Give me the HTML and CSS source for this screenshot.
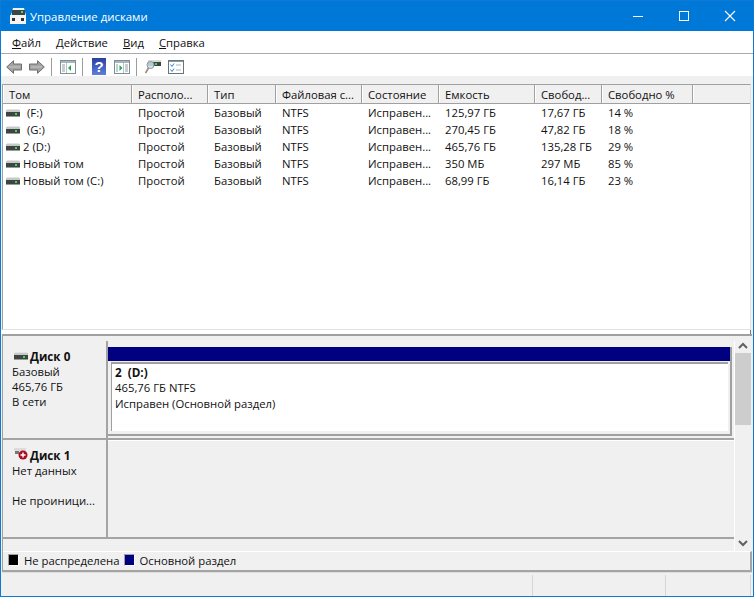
FILE: index.html
```html
<!DOCTYPE html>
<html lang="ru">
<head>
<meta charset="utf-8">
<title>Управление дисками</title>
<link rel="stylesheet" href="styles.css">
</head>
<body>
<svg class="defs" width="0" height="0" aria-hidden="true">
  <defs>
    <symbol id="drive" viewBox="0 0 14 8">
      <rect x="1" y="0" width="12" height="1" fill="#e4e4e4"/>
      <rect x="0" y="1" width="14" height="2" fill="#c8c8c8"/>
      <rect x="0" y="3" width="14" height="4" fill="#3e4442"/>
      <rect x="0" y="7" width="14" height="1" fill="#9a9a9a"/>
      <rect x="9" y="4" width="2" height="2" fill="#35e04a"/>
    </symbol>
    <linearGradient id="helpfill" x1="0" y1="0" x2="0" y2="1">
      <stop offset="0" stop-color="#2a3f9e"/>
      <stop offset="1" stop-color="#5f7fdc"/>
    </linearGradient>
  </defs>
</svg>
<div class="window">
  <header class="titlebar">
    <svg class="app-icon" width="18" height="17" viewBox="0 0 18 17">
      <path d="M4 0h11l2 7H2z" fill="#f0f0f0"/>
      <rect x="3" y="2" width="13" height="5" fill="#39464a"/>
      <rect x="12" y="3" width="2" height="2" fill="#3fe05a"/>
      <rect x="1" y="7" width="16" height="9" fill="#f4f4f4"/>
      <rect x="3" y="10" width="3" height="3" fill="#333"/>
      <rect x="12" y="10" width="3" height="3" fill="#333"/>
    </svg>
    <span class="title">Управление дисками</span>
    <div class="win-buttons">
      <svg class="win-btn" width="46" height="30" viewBox="0 0 46 30"><rect x="18" y="15" width="10" height="1" fill="#fff"/></svg>
      <svg class="win-btn" width="46" height="30" viewBox="0 0 46 30"><rect x="18.5" y="10.5" width="9" height="9" fill="none" stroke="#fff"/></svg>
      <svg class="win-btn" width="46" height="30" viewBox="0 0 46 30"><path d="M18 10l10 10M28 10L18 20" stroke="#fff" stroke-width="1.1" fill="none"/></svg>
    </div>
  </header>

  <nav class="menubar">
    <span class="menu-item"><u>Ф</u>айл</span>
    <span class="menu-item"><u>Д</u>ействие</span>
    <span class="menu-item"><u>В</u>ид</span>
    <span class="menu-item"><u>С</u>правка</span>
  </nav>

  <div class="toolbar">
    <div class="tool-group">
      <svg class="tool" width="16" height="14" viewBox="0 0 16 14"><path d="M.7 7L7.5.7V4h8v6h-8v3.3z" fill="#a3a3a3" stroke="#6e6e6e"/><path d="M3 7h11" stroke="#c6c6c6"/></svg>
      <svg class="tool" width="16" height="14" viewBox="0 0 16 14"><path d="M15.3 7L8.5.7V4h-8v6h8v3.3z" fill="#a3a3a3" stroke="#6e6e6e"/><path d="M2 7h11" stroke="#c6c6c6"/></svg>
    </div>
    <span class="tool-sep"></span>
    <svg class="tool" width="16" height="14" viewBox="0 0 16 14"><rect x=".5" y=".5" width="15" height="13" fill="#fff" stroke="#7f8d96"/><rect x="1" y="1" width="14" height="2" fill="#a8b4bc"/><path d="M2 5h3M2 7h3M2 9h3M2 11h3" stroke="#8f9ca4"/><path d="M6.5 3v10" stroke="#b8c2c8"/><path d="M11 5v6L8 8z" fill="#23a850"/></svg>
    <span class="tool-sep"></span>
    <div class="tool-group tool-group-help">
      <svg class="tool" width="14" height="17" viewBox="0 0 14 17"><rect width="14" height="17" fill="url(#helpfill)"/><text x="7" y="14" class="help-q">?</text></svg>
      <svg class="tool" width="16" height="14" viewBox="0 0 16 14"><rect x=".5" y=".5" width="15" height="13" fill="#fff" stroke="#7f8d96"/><rect x="1" y="1" width="14" height="2" fill="#a8b4bc"/><path d="M11 5h3M11 7h3M11 9h3M11 11h3M2 5h2M2 7h2M2 9h2M2 11h2" stroke="#8f9ca4"/><path d="M9.5 3v10" stroke="#b8c2c8"/><path d="M5.5 5v6l3-3z" fill="#23a850"/></svg>
    </div>
    <span class="tool-sep"></span>
    <div class="tool-group">
      <svg class="tool" width="16" height="15" viewBox="0 0 16 15"><rect x="3" y="1" width="13" height="2" fill="#d8d8d8"/><rect x="3" y="3" width="13" height="4" fill="#3e4442"/><rect x="10" y="4" width="2" height="2" fill="#35e04a"/><circle cx="5.5" cy="6" r="3.5" fill="#cfe0ea" fill-opacity=".85" stroke="#8a949a"/><path d="M3.5 9L.5 14" stroke="#a08a70" stroke-width="1.6"/></svg>
      <svg class="tool" width="16" height="14" viewBox="0 0 16 14"><rect x=".5" y=".5" width="15" height="13" fill="#fff" stroke="#68747c"/><rect x="1" y="1" width="14" height="1" fill="#8c98a0"/><path d="M2.5 4.5l1.5 2 2-3M2.5 9.5l1.5 2 2-3" stroke="#2f7fd6" fill="none"/><path d="M8 5h5M8 10h5" stroke="#a9b3b9"/></svg>
    </div>
  </div>

  <section class="list">
    <div class="row list-head">
      <span class="col c1">Том</span><span class="col c2">Располо...</span><span class="col c3">Тип</span><span class="col c4">Файловая с...</span><span class="col c5">Состояние</span><span class="col c6">Емкость</span><span class="col c7">Свобод...</span><span class="col c8">Свободно %</span><span class="col c9"></span>
    </div>
    <div class="row item"><span class="col c1"><svg class="drive"><use href="#drive"/></svg><span class="vol-gap">(F:)</span></span><span class="col c2">Простой</span><span class="col c3">Базовый</span><span class="col c4">NTFS</span><span class="col c5">Исправен...</span><span class="col c6">125,97 ГБ</span><span class="col c7">17,67 ГБ</span><span class="col c8">14 %</span></div>
    <div class="row item"><span class="col c1"><svg class="drive"><use href="#drive"/></svg><span class="vol-gap">(G:)</span></span><span class="col c2">Простой</span><span class="col c3">Базовый</span><span class="col c4">NTFS</span><span class="col c5">Исправен...</span><span class="col c6">270,45 ГБ</span><span class="col c7">47,82 ГБ</span><span class="col c8">18 %</span></div>
    <div class="row item"><span class="col c1"><svg class="drive"><use href="#drive"/></svg><span>2 (D:)</span></span><span class="col c2">Простой</span><span class="col c3">Базовый</span><span class="col c4">NTFS</span><span class="col c5">Исправен...</span><span class="col c6">465,76 ГБ</span><span class="col c7">135,28 ГБ</span><span class="col c8">29 %</span></div>
    <div class="row item"><span class="col c1"><svg class="drive"><use href="#drive"/></svg><span>Новый том</span></span><span class="col c2">Простой</span><span class="col c3">Базовый</span><span class="col c4">NTFS</span><span class="col c5">Исправен...</span><span class="col c6">350 МБ</span><span class="col c7">297 МБ</span><span class="col c8">85 %</span></div>
    <div class="row item"><span class="col c1"><svg class="drive"><use href="#drive"/></svg><span>Новый том (C:)</span></span><span class="col c2">Простой</span><span class="col c3">Базовый</span><span class="col c4">NTFS</span><span class="col c5">Исправен...</span><span class="col c6">68,99 ГБ</span><span class="col c7">16,14 ГБ</span><span class="col c8">23 %</span></div>
  </section>
  <div class="splitter"></div>

  <section class="graph">
    <div class="graph-body">
      <div class="disks">
        <div class="disk disk-0">
          <div class="disk-label">
            <div class="disk-name"><svg class="drive"><use href="#drive"/></svg><b>Диск 0</b></div>
            <div>Базовый</div>
            <div>465,76 ГБ</div>
            <div>В сети</div>
          </div>
          <div class="disk-area">
            <div class="part-frame">
              <div class="part-bar"></div>
              <div class="part-box">
                <div class="part-name"><b>2&nbsp; (D:)</b></div>
                <div>465,76 ГБ NTFS</div>
                <div>Исправен (Основной раздел)</div>
              </div>
            </div>
          </div>
        </div>
        <div class="disk disk-1">
          <div class="disk-label">
            <div class="disk-name">
              <svg class="disk-err" width="16" height="13" viewBox="0 0 16 13"><rect x="0" y="0" width="12" height="3" fill="#dcdcdc"/><rect x="1" y="3" width="4" height="3" fill="#777"/><circle cx="9" cy="7" r="4.5" fill="#a80f20"/><path d="M6.5 7h5M9 4.5v5" stroke="#fff" stroke-width="1.4"/></svg><b>Диск 1</b>
            </div>
            <div>Нет данных</div>
            <div>&nbsp;</div>
            <div>Не проиници...</div>
          </div>
          <div class="disk-area disk-area-empty"></div>
        </div>
      </div>
      <div class="scroll">
        <svg class="scroll-up" width="16" height="12" viewBox="0 0 16 12"><path d="M4 7l4-4 4 4" fill="none" stroke="#606060" stroke-width="2"/></svg>
        <div class="scroll-thumb"></div>
        <div class="scroll-track"></div>
        <svg class="scroll-down" width="16" height="16" viewBox="0 0 16 16"><path d="M4 6l4 4 4-4" fill="none" stroke="#606060" stroke-width="2"/></svg>
      </div>
    </div>
    <div class="legend">
      <span class="swatch swatch-black"></span><span class="legend-text">Не распределена</span>
      <span class="swatch swatch-navy"></span><span class="legend-text">Основной раздел</span>
    </div>
  </section>

  <footer class="statusbar">
    <span class="st st-1"></span><span class="st st-2"></span><span class="st st-3"></span>
  </footer>
</div>
</body>
</html>
```
FILE: styles.css
```css
* { box-sizing: border-box; }
html, body { margin: 0; padding: 0; }
body {
  width: 755px;
  height: 599px;
  overflow: hidden;
  background: #fff;
  font-family: "Open Sans", "Noto Sans", sans-serif;
  font-size: 11.3px;
  color: #111;
}
.defs { position: absolute; }
.window {
  width: 754px;
  height: 597px;
  display: flex;
  flex-direction: column;
  border: 1px solid #0f7ad6;
  background: #f0f0f0;
}
.titlebar {
  height: 30px;
  flex: none;
  background: #0078d7;
  color: #fff;
  display: flex;
  align-items: center;
  padding-left: 8px;
}
.app-icon { margin-right: 3px; }
.title { font-size: 11.4px; }
.win-buttons { margin-left: auto; display: flex; }
.win-btn { display: block; }
.menubar {
  height: 23px;
  flex: none;
  background: #fff;
  border-bottom: 1px solid #a9a9b0;
  display: flex;
  align-items: center;
  padding-left: 3px;
}
.menu-item { padding: 0 8px; margin-right: -1px; }
.toolbar {
  height: 22px;
  flex: none;
  background: #fff;
  display: flex;
  align-items: center;
  padding: 3px 0 0 5px;
}
.tool-group { display: flex; align-items: center; gap: 7px; }
.tool-group-help { gap: 8px; margin-left: 1px; }
.tool { flex: none; display: block; }
.tool-sep { width: 1px; height: 18px; background: #9c9c9c; flex: none; margin: 0 8px 0 6px; }
.help-q { font-family: "Liberation Sans", sans-serif; font-size: 15px; font-weight: bold; fill: #fff; text-anchor: middle; }
.list {
  margin: 8px 2px 0 1px;
  height: 246px;
  flex: none;
  background: #fff;
  border: 1px solid #a0a0a0;
  border-bottom-color: #e2e2e2;
  border-right-color: #e2e2e2;
  overflow: hidden;
}
.row { display: flex; }
.list-head { height: 19px; background: #f0f0f0; border-bottom: 1px solid #a0a0a0; }
.list-head .col { padding-left: 5px; line-height: 19px; border-right: 1px solid #a0a0a0; border-left: 1px solid #fff; }
.item { height: 17px; line-height: 17px; }
.item .col { padding-left: 6px; }
.item .c1 { padding-left: 3px; display: flex; align-items: center; }
.col { display: block; flex: none; overflow: hidden; white-space: nowrap; }
.c1 { width: 129px; }
.c2 { width: 76px; }
.c3 { width: 68px; }
.c4 { width: 86px; }
.c5 { width: 77px; }
.c6 { width: 96px; }
.c7 { width: 67px; }
.c8 { width: 91px; }
.list-head .col.c9 { flex: 1; border-right: 0; }
.drive { width: 14px; height: 8px; flex: none; margin-right: 3px; }
.vol-gap { margin-left: 4px; }
.splitter { height: 4px; flex: none; margin-right: 2px; background: #fff; border-right: 1px solid #777; }
.graph {
  flex: none;
  height: 238px;
  display: flex;
  flex-direction: column;
  margin: 0 1px 0 1px;
  border-top: 2px solid #a0a0a0;
  border-left: 1px solid #a0a0a0;
}
.graph-body { height: 215px; flex: none; display: flex; padding-top: 5px; }
.disks { width: 731px; flex: none; display: flex; flex-direction: column; }
.disk { display: flex; flex: none; height: 99px; border-bottom: 2px solid #a4a4a4; }
.disk-label {
  width: 105px;
  flex: none;
  padding: 8px 0 0 9px;
  line-height: 15px;
  border-right: 2px solid #a4a4a4;
}
.disk-name { display: flex; align-items: center; font-size: 11.7px; height: 15px; padding-left: 2px; }
.disk-name .drive { margin-right: 2px; margin-top: -2px; }
.disk-err { margin-right: 0; margin-top: -2px; }
.disk-area { flex: 1; padding: 6px 2px 0 0; }
.disk-area-empty { border-top: 1px solid #fff; }
.part-frame { height: 89px; border-right: 2px solid #a0a0a0; border-bottom: 2px solid #a0a0a0; }
.part-bar { height: 14px; background: #000080; }
.part-box {
  height: 69px;
  margin: 1px 2px 0 3px;
  background: #fff;
  border-top: 2px solid #a0a0a0;
  border-left: 1px solid #a0a0a0;
  padding-left: 3px;
  line-height: 16px;
}
.part-name { font-size: 11.7px; }
.scroll { width: 17px; flex: none; display: flex; flex-direction: column; border-left: 1px solid #fff; }
.scroll-up { display: block; flex: none; }
.scroll-down { display: block; flex: none; }
.scroll-thumb { height: 72px; background: #cdcdcd; width: 16px; flex: none; }
.scroll-track { flex: 1; }
.legend {
  height: 21px;
  flex: none;
  display: flex;
  align-items: center;
  border-top: 1px solid #fff;
  border-bottom: 2px solid #a4a4a4;
  border-right: 2px solid #a4a4a4;
  padding: 0 0 2px 5px;
}
.swatch {
  width: 11px;
  height: 12px;
  flex: none;
  border: 1px solid #a0a0a0;
  border-right-color: #fff;
  border-bottom-color: #fff;
  margin-right: 5px;
}
.swatch-black { background: #000; }
.swatch-navy { background: #000080; }
.legend-text { margin-right: 4px; }
.statusbar {
  height: 24px;
  flex: none;
  display: flex;
  border-top: 1px solid #dedede;
  margin: 0 1px;
  padding: 2px 0 0 530px;
}
.st { display: block; border-left: 1px solid #d6d6d6; }
.st-1 { width: 133px; }
.st-2 { width: 85px; }
.st-3 { width: 1px; }
```
